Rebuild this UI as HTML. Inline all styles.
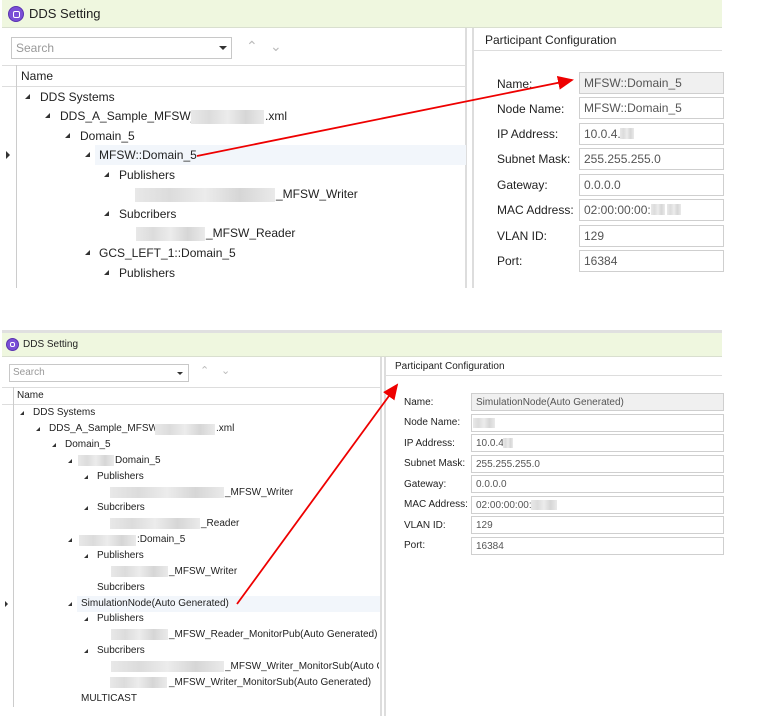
<!DOCTYPE html>
<html><head><meta charset="utf-8"><style>
*{margin:0;padding:0;box-sizing:border-box}
body{width:776px;height:716px;background:#fff;position:relative;overflow:hidden;font-family:"Liberation Sans","Noto Sans CJK SC",sans-serif;color:#222}
.a{position:absolute;white-space:nowrap}
.title{background:#eff7df;border-bottom:1px solid #d9dfcf}
.ic{position:absolute;border-radius:50%;background:#7a4fd6;border:1px solid #5a33b0}
.ic:after{content:"";position:absolute;left:25%;top:25%;width:50%;height:50%;border:1.5px solid #fff;border-radius:2px;box-sizing:border-box}
.box{position:absolute;border:1px solid #c8c8c8;background:#fff}
.tri{position:absolute;width:0;height:0;border-left:5px solid transparent;border-bottom:5px solid #333}
.blur{position:absolute;background:linear-gradient(90deg,#e8e8e8,#dcdcdc,#ececec,#d6d6d6,#eaeaea)}
.fld{position:absolute;border:1px solid #cfcfcf;background:#fff;color:#555;padding-left:4px}
.b .fld{line-height:18px}
</style></head><body>
<!-- TOP -->
<div class="a title" style="left:2px;top:0;width:720px;height:28px"></div>
<div class="ic" style="left:8px;top:6px;width:16px;height:16px"></div>
<div class="a" style="left:29px;top:6px;font-size:13px">DDS Setting</div>
<div class="a" style="left:2px;top:28px;width:465px;height:260px;border-right:2px solid #ddd"></div>
<div class="box" style="left:11px;top:37px;width:221px;height:22px"></div>
<div class="a" style="left:16px;top:41px;font-size:12px;color:#999">Search</div>
<div class="a" style="left:219px;top:46px;border-left:4px solid transparent;border-right:4px solid transparent;border-top:4px solid #333"></div>
<div class="a" style="left:246px;top:38px;font-size:14px;color:#bbb">&#8963;</div>
<div class="a" style="left:270px;top:38px;font-size:14px;color:#bbb">&#8964;</div>
<div class="a" style="left:2px;top:65px;width:465px;height:22px;border-top:1px solid #ddd;border-bottom:1px solid #ddd"></div>
<div class="a" style="left:16px;top:65px;width:1px;height:223px;background:#ccc"></div>
<div class="a" style="left:21px;top:69px;font-size:12px">Name</div>
<div class="a" style="left:95px;top:145px;width:371px;height:20px;background:#f2f6fb"></div>
<div class="a" style="left:6px;top:151px;border-top:4px solid transparent;border-bottom:4px solid transparent;border-left:4px solid #333"></div>
<div class="tri" style="left:25px;top:94px"></div><div class="a" style="left:40px;top:90px;font-size:12px">DDS Systems</div>
<div class="tri" style="left:45px;top:113px"></div><div class="a" style="left:60px;top:109px;font-size:12px">DDS_A_Sample_MFSW_</div><div class="blur" style="left:191px;top:110px;width:73px;height:14px"></div><div class="a" style="left:265px;top:109px;font-size:12px">.xml</div>
<div class="tri" style="left:65px;top:133px"></div><div class="a" style="left:80px;top:129px;font-size:12px">Domain_5</div>
<div class="tri" style="left:85px;top:152px"></div><div class="a" style="left:99px;top:148px;font-size:12px">MFSW::Domain_5</div>
<div class="tri" style="left:104px;top:172px"></div><div class="a" style="left:119px;top:168px;font-size:12px">Publishers</div>
<div class="blur" style="left:135px;top:188px;width:140px;height:14px"></div><div class="a" style="left:276px;top:187px;font-size:12px">_MFSW_Writer</div>
<div class="tri" style="left:104px;top:211px"></div><div class="a" style="left:119px;top:207px;font-size:12px">Subcribers</div>
<div class="blur" style="left:136px;top:227px;width:69px;height:14px"></div><div class="a" style="left:206px;top:226px;font-size:12px">_MFSW_Reader</div>
<div class="tri" style="left:85px;top:250px"></div><div class="a" style="left:99px;top:246px;font-size:12px">GCS_LEFT_1::Domain_5</div>
<div class="tri" style="left:104px;top:270px"></div><div class="a" style="left:119px;top:266px;font-size:12px">Publishers</div>
<!-- top right -->
<div class="a" style="left:472px;top:28px;width:250px;height:260px;border-left:2px solid #ddd"></div>
<div class="a" style="left:474px;top:29px;width:248px;height:22px;border-bottom:1px solid #ddd"></div>
<div class="a" style="left:485px;top:33px;font-size:12px">Participant Configuration</div>
<div class="a" style="left:497px;top:77px;font-size:12px;line-height:14px">Name:</div>
<div class="a" style="left:497px;top:102px;font-size:12px">Node Name:</div>
<div class="a" style="left:497px;top:127px;font-size:12px">IP Address:</div>
<div class="a" style="left:497px;top:152px;font-size:12px">Subnet Mask:</div>
<div class="a" style="left:497px;top:178px;font-size:12px">Gateway:</div>
<div class="a" style="left:497px;top:203px;font-size:12px">MAC Address:</div>
<div class="a" style="left:497px;top:229px;font-size:12px">VLAN ID:</div>
<div class="a" style="left:497px;top:254px;font-size:12px">Port:</div>
<div class="fld" style="left:579px;top:72px;width:145px;height:22px;background:#f0f0f0;font-size:12px;line-height:20px">MFSW::Domain_5</div>
<div class="fld" style="left:579px;top:97px;width:145px;height:22px;font-size:12px;line-height:20px">MFSW::Domain_5</div>
<div class="fld" style="left:579px;top:123px;width:145px;height:22px;font-size:12px;line-height:20px">10.0.4.</div>
<div class="fld" style="left:579px;top:148px;width:145px;height:22px;font-size:12px;line-height:20px">255.255.255.0</div>
<div class="fld" style="left:579px;top:174px;width:145px;height:22px;font-size:12px;line-height:20px">0.0.0.0</div>
<div class="fld" style="left:579px;top:199px;width:145px;height:22px;font-size:12px;line-height:20px">02:00:00:00:</div>
<div class="fld" style="left:579px;top:225px;width:145px;height:22px;font-size:12px;line-height:20px">129</div>
<div class="fld" style="left:579px;top:250px;width:145px;height:22px;font-size:12px;line-height:20px">16384</div>
<div class="blur" style="left:620px;top:128px;width:14px;height:11px"></div>
<div class="blur" style="left:651px;top:204px;width:14px;height:11px"></div>
<div class="blur" style="left:667px;top:204px;width:14px;height:11px"></div>

<!-- BOTTOM -->
<div class="a" style="left:2px;top:330px;width:720px;height:3px;background:#e0e0e0"></div>
<div class="a title" style="left:2px;top:333px;width:720px;height:24px"></div>
<div class="ic" style="left:6px;top:338px;width:13px;height:13px"></div>
<div class="a" style="left:23px;top:339px;font-size:10px">DDS Setting</div>
<div class="a" style="left:2px;top:357px;width:380px;height:359px;border-right:2px solid #ddd"></div>
<div class="box" style="left:9px;top:364px;width:180px;height:18px"></div>
<div class="a" style="left:13px;top:367px;font-size:10px;color:#999">Search</div>
<div class="a" style="left:177px;top:372px;border-left:3px solid transparent;border-right:3px solid transparent;border-top:3px solid #333"></div>
<div class="a" style="left:200px;top:364px;font-size:11px;color:#bbb">&#8963;</div>
<div class="a" style="left:221px;top:364px;font-size:11px;color:#bbb">&#8964;</div>
<div class="a" style="left:2px;top:387px;width:378px;height:18px;border-top:1px solid #ddd;border-bottom:1px solid #ddd"></div>
<div class="a" style="left:13px;top:387px;width:1px;height:320px;background:#ccc"></div>
<div class="a" style="left:17px;top:390px;font-size:10px">Name</div>
<div class="a" style="left:77px;top:596px;width:303px;height:16px;background:#f2f6fb"></div>
<div class="a" style="left:5px;top:601px;border-top:3px solid transparent;border-bottom:3px solid transparent;border-left:3px solid #333"></div>
<div style="font-size:10px">
<div class="tri" style="left:20px;top:411px;border-left-width:4px;border-bottom-width:4px"></div><div class="a" style="left:33px;top:407px">DDS Systems</div>
<div class="tri" style="left:36px;top:427px;border-left-width:4px;border-bottom-width:4px"></div><div class="a" style="left:49px;top:423px">DDS_A_Sample_MFSW_</div><div class="blur" style="left:155px;top:424px;width:60px;height:11px"></div><div class="a" style="left:216px;top:423px">.xml</div>
<div class="tri" style="left:52px;top:443px;border-left-width:4px;border-bottom-width:4px"></div><div class="a" style="left:65px;top:439px">Domain_5</div>
<div class="tri" style="left:68px;top:459px;border-left-width:4px;border-bottom-width:4px"></div><div class="blur" style="left:78px;top:455px;width:36px;height:11px"></div><div class="a" style="left:115px;top:455px">Domain_5</div>
<div class="tri" style="left:84px;top:475px;border-left-width:4px;border-bottom-width:4px"></div><div class="a" style="left:97px;top:471px">Publishers</div>
<div class="blur" style="left:110px;top:487px;width:114px;height:11px"></div><div class="a" style="left:225px;top:487px">_MFSW_Writer</div>
<div class="tri" style="left:84px;top:506px;border-left-width:4px;border-bottom-width:4px"></div><div class="a" style="left:97px;top:502px">Subcribers</div>
<div class="blur" style="left:110px;top:518px;width:90px;height:11px"></div><div class="a" style="left:201px;top:518px">_Reader</div>
<div class="tri" style="left:68px;top:538px;border-left-width:4px;border-bottom-width:4px"></div><div class="blur" style="left:79px;top:535px;width:57px;height:11px"></div><div class="a" style="left:137px;top:534px">:Domain_5</div>
<div class="tri" style="left:84px;top:554px;border-left-width:4px;border-bottom-width:4px"></div><div class="a" style="left:97px;top:550px">Publishers</div>
<div class="blur" style="left:111px;top:566px;width:57px;height:11px"></div><div class="a" style="left:169px;top:566px">_MFSW_Writer</div>
<div class="a" style="left:97px;top:582px">Subcribers</div>
<div class="tri" style="left:68px;top:602px;border-left-width:4px;border-bottom-width:4px"></div><div class="a" style="left:81px;top:598px">SimulationNode(Auto Generated)</div>
<div class="tri" style="left:84px;top:617px;border-left-width:4px;border-bottom-width:4px"></div><div class="a" style="left:97px;top:613px">Publishers</div>
<div class="blur" style="left:111px;top:629px;width:57px;height:11px"></div><div class="a" style="left:169px;top:629px">_MFSW_Reader_MonitorPub(Auto Generated)</div>
<div class="tri" style="left:84px;top:649px;border-left-width:4px;border-bottom-width:4px"></div><div class="a" style="left:97px;top:645px">Subcribers</div>
<div class="blur" style="left:111px;top:661px;width:113px;height:11px"></div><div class="a" style="left:225px;top:661px;width:154px;overflow:hidden">_MFSW_Writer_MonitorSub(Auto Generated)</div>
<div class="blur" style="left:110px;top:677px;width:57px;height:11px"></div><div class="a" style="left:169px;top:677px">_MFSW_Writer_MonitorSub(Auto Generated)</div>
<div class="a" style="left:81px;top:693px">MULTICAST</div>
</div>
<!-- bottom right -->
<div class="a" style="left:384px;top:357px;width:340px;height:359px;border-left:2px solid #ddd"></div>
<div class="a" style="left:386px;top:357px;width:336px;height:19px;border-bottom:1px solid #ddd"></div>
<div class="a" style="left:395px;top:361px;font-size:10px">Participant Configuration</div>
<div class="b" style="font-size:10px">
<div class="a" style="left:404px;top:397px">Name:</div>
<div class="a" style="left:404px;top:417px">Node Name:</div>
<div class="a" style="left:404px;top:438px">IP Address:</div>
<div class="a" style="left:404px;top:458px">Subnet Mask:</div>
<div class="a" style="left:404px;top:479px">Gateway:</div>
<div class="a" style="left:404px;top:499px">MAC Address:</div>
<div class="a" style="left:404px;top:520px">VLAN ID:</div>
<div class="a" style="left:404px;top:540px">Port:</div>
<div class="fld" style="left:471px;top:393px;width:253px;height:18px;background:#f0f0f0">SimulationNode(Auto Generated)</div>
<div class="fld" style="left:471px;top:414px;width:253px;height:18px"></div>
<div class="fld" style="left:471px;top:434px;width:253px;height:18px">10.0.4.</div>
<div class="fld" style="left:471px;top:455px;width:253px;height:18px">255.255.255.0</div>
<div class="fld" style="left:471px;top:475px;width:253px;height:18px">0.0.0.0</div>
<div class="fld" style="left:471px;top:496px;width:253px;height:18px">02:00:00:00:</div>
<div class="fld" style="left:471px;top:516px;width:253px;height:18px">129</div>
<div class="fld" style="left:471px;top:537px;width:253px;height:18px">16384</div>
<div class="blur" style="left:473px;top:418px;width:22px;height:10px"></div>
<div class="blur" style="left:503px;top:438px;width:10px;height:10px"></div>
<div class="blur" style="left:531px;top:500px;width:26px;height:10px"></div>
</div>
<svg class="a" style="left:0;top:0" width="776" height="716">
<defs><marker id="m2" markerWidth="16" markerHeight="14" refX="14" refY="7" orient="auto" markerUnits="userSpaceOnUse"><path d="M0,0 L16,7 L0,14 Z" fill="#e00"/></marker></defs>
<line x1="197" y1="156" x2="572" y2="80" stroke="#e00" stroke-width="1.8" marker-end="url(#m2)"/>
<line x1="237" y1="604" x2="397" y2="385" stroke="#e00" stroke-width="1.8" marker-end="url(#m2)"/>
</svg>
</body></html>
